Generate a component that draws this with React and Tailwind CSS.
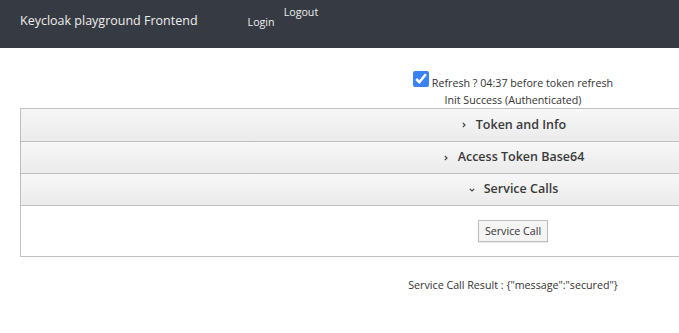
import { useState } from "react"

const PANELS = [
  { id: "token", title: "Token and Info" },
  { id: "base64", title: "Access Token Base64" },
  { id: "calls", title: "Service Calls" },
]

function Chevron({ open }) {
  return (
    <svg width="8" height="8" viewBox="0 0 8 8" className="mr-2">
      {open ? (
        <path d="M1.8 2.8 L4 5 L6.2 2.8" stroke="#444" strokeWidth="1.2" fill="none" />
      ) : (
        <path d="M2.8 1.8 L5 4 L2.8 6.2" stroke="#444" strokeWidth="1.2" fill="none" />
      )}
    </svg>
  )
}

export default function App() {
  const [open, setOpen] = useState("calls")
  const [refresh, setRefresh] = useState(true)

  return (
    <div className="w-[1026px] bg-white text-[#333]" style={{ fontFamily: '"Open Sans", sans-serif' }}>
      {/* header */}
      <div className="h-12 bg-[#363a42] text-[#eee] flex px-5">
        <div className="text-[12.5px] mt-[12px]">Keycloak playground Frontend</div>
        <div className="text-[10.7px] mt-[14px] ml-[50px]">Login</div>
        <div className="text-[10.7px] mt-[4px] ml-[9px]">Logout</div>
      </div>

      <div className="px-5 pt-[20px]">
        <div className="flex justify-center items-center text-[10.7px]">
          <input
            type="checkbox"
            checked={refresh}
            onChange={(e) => setRefresh(e.target.checked)}
            className="w-4 h-4 m-0 mr-[3px] mb-[2px] accent-[#3b82f6]"
          />
          <span className="mt-[7px]">Refresh ? 04:37 before token refresh</span>
        </div>
        <div className="text-center text-[10.7px] leading-[17px] mt-[1px]">Init Success (Authenticated)</div>

        {/* accordion */}
        <div className="border border-[#c0c0c0] -mt-[1px]">
          {PANELS.map((p, i) => (
            <div key={p.id}>
              <button
                onClick={() => setOpen(open === p.id ? null : p.id)}
                className={
                  "w-full h-8 flex items-center justify-center text-[12.5px] font-semibold text-[#3a3a3a] bg-gradient-to-b from-[#f7f7f7] to-[#ebebeb] " +
                  (i > 0 ? "border-t border-[#c0c0c0]" : "")
                }
              >
                <Chevron open={open === p.id} />
                {p.title}
              </button>
              {open === p.id && (
                <div className="border-t border-[#c0c0c0] h-[51px] flex justify-center pt-[14px]">
                  {p.id === "calls" && (
                    <button className="h-[22px] px-[6px] text-[10.7px] text-[#333] bg-[#f5f5f5] border border-[#bcbcbc] shadow-[0_1px_1px_rgba(0,0,0,0.08)]">
                      Service Call
                    </button>
                  )}
                </div>
              )}
            </div>
          ))}
        </div>

        <div className="text-center text-[10.7px] mt-[20px]">
          Service Call Result : {'{"message":"secured"}'}
        </div>
      </div>
    </div>
  )
}
